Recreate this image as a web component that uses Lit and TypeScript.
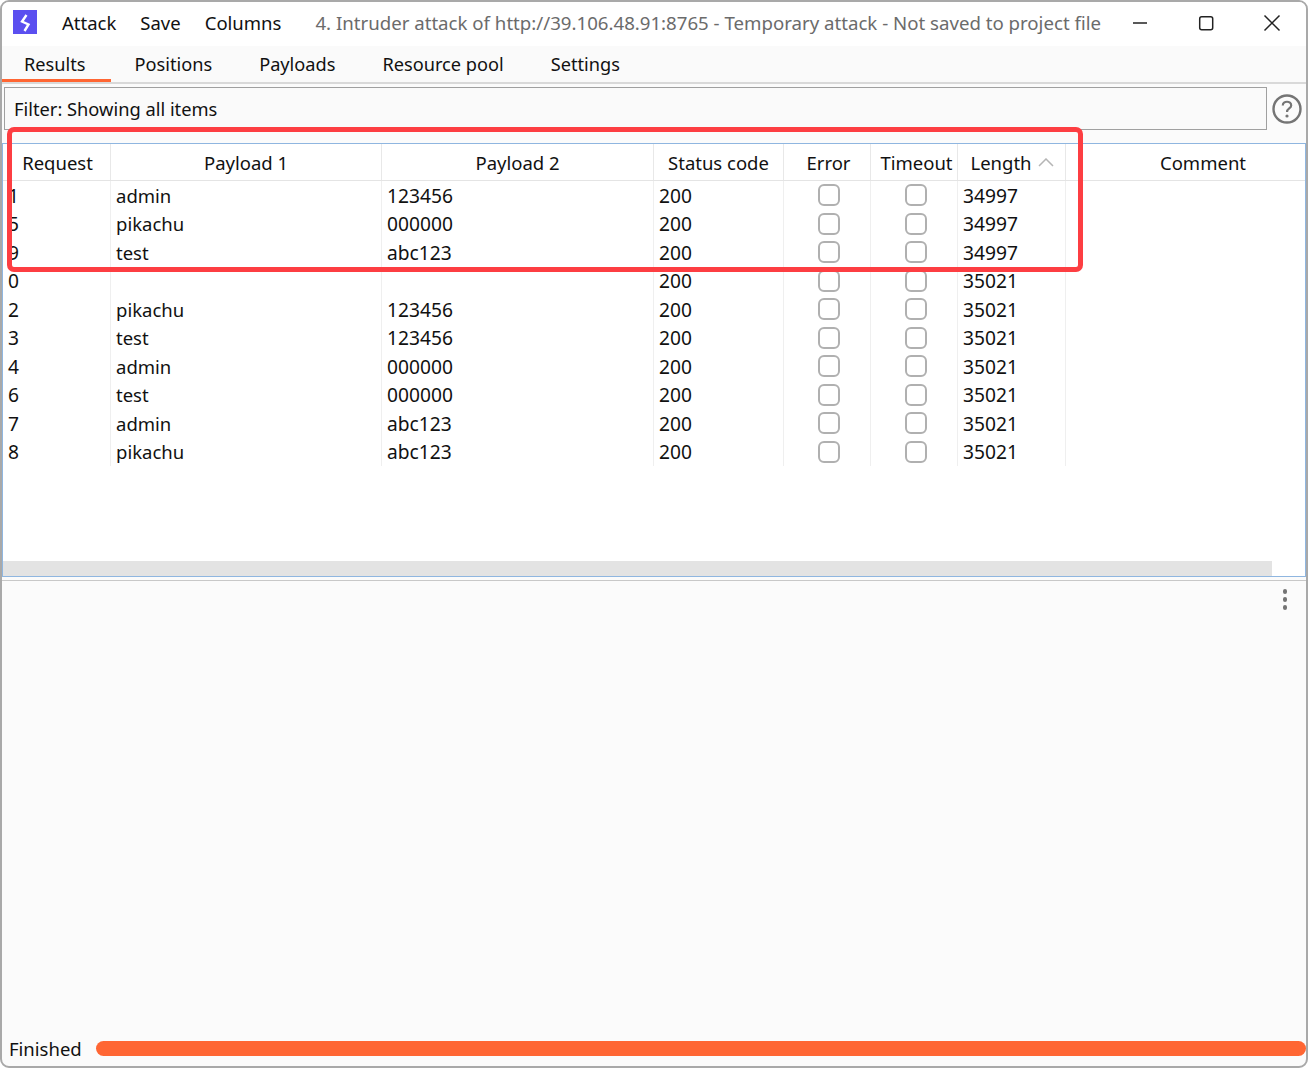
import { LitElement, html, css, svg } from "lit";
import { customElement } from "lit/decorators.js";

const ROWS = [
  ["1", "admin", "123456", "200", "34997"],
  ["5", "pikachu", "000000", "200", "34997"],
  ["9", "test", "abc123", "200", "34997"],
  ["0", "", "", "200", "35021"],
  ["2", "pikachu", "123456", "200", "35021"],
  ["3", "test", "123456", "200", "35021"],
  ["4", "admin", "000000", "200", "35021"],
  ["6", "test", "000000", "200", "35021"],
  ["7", "admin", "abc123", "200", "35021"],
  ["8", "pikachu", "abc123", "200", "35021"],
];

@customElement("app-root")
export class AppRoot extends LitElement {
  static styles = css`
    :host {
      display: block;
      width: 1308px;
      height: 1068px;
      background: #fff;
      font-family: "Noto Sans", "Open Sans", sans-serif;
      font-size: 18.5px;
      color: #111;
      overflow: hidden;
    }
    .window {
      position: relative;
      box-sizing: border-box;
      width: 1308px;
      height: 1068px;
      border: 2px solid #a9a9a9;
      border-radius: 9px;
      background: #fbfbfb;
      display: flex;
      flex-direction: column;
      overflow: hidden;
    }
    .titlebar {
      height: 44px;
      flex: none;
      background: #fff;
      display: flex;
      align-items: center;
      padding-left: 11px;
    }
    .logo {
      width: 24px;
      height: 24px;
      flex: none;
      display: block;
      margin: -4px 25px 0 0;
    }
    .menu {
      margin: 0 24px 3px 0;
    }
    .title {
      color: #6b6b6b;
      margin: 0 0 3px 10px;
      flex: 1;
      white-space: nowrap;
      font-size: 18.65px;
    }
    .wbtn {
      display: block;
      flex: none;
      margin-right: 24px;
    }
    .tabs {
      flex: none;
      display: flex;
      border-bottom: 2px solid #d9d9d9;
      box-sizing: border-box;
      height: 38px;
      background: #fafafa;
      font-size: 18.2px;
    }
    .tab {
      display: flex;
      align-items: center;
      height: 36px;
      padding: 0 23.5px;
      box-sizing: border-box;
    }
    .tab.active {
      width: 109px;
      padding: 3px 0 0 22px;
      border-bottom: 3px solid #ff6633;
    }
    .filterrow {
      display: flex;
      align-items: center;
      padding: 3px 0 0 2px;
      height: 46px;
      box-sizing: border-box;
      flex: none;
    }
    .filter {
      box-sizing: border-box;
      width: 1263px;
      height: 43px;
      border: 1px solid #a0a0a0;
      background: #fafafa;
      display: flex;
      align-items: center;
      padding-left: 9px;
      font-size: 18.3px;
    }
    .help {
      display: block;
      margin: 1px 0 0 5px;
    }
    .table {
      margin-top: 13px;
      box-sizing: border-box;
      height: 434px;
      flex: none;
      background: #fff;
      border: 1px solid #8fb6e0;
      position: relative;
      display: flex;
      flex-direction: column;
      overflow: hidden;
    }
    .grid {
      display: grid;
      grid-template-columns: 108px 271px 272px 130px 87px 87px 108px 274px;
    }
    .head {
      height: 37px;
      border-bottom: 1px solid #e4e4e4;
      box-sizing: border-box;
      flex: none;
    }
    .h {
      display: flex;
      align-items: center;
      justify-content: center;
      box-sizing: border-box;
      border-right: 1px solid #e8e8e8;
      white-space: nowrap;
    }
    .h:first-child {
      padding-left: 2px;
    }
    .h:last-child {
      border-right: none;
    }
    .h.err {
      padding-left: 3px;
    }
    .h.tmo {
      padding-left: 5px;
    }
    .sorted {
      gap: 6px;
      padding-left: 1px;
    }
    .body {
      grid-auto-rows: 28.5px;
      height: 285px;
      flex: none;
    }
    .c {
      display: flex;
      align-items: center;
      box-sizing: border-box;
      padding: 0 0 0 5px;
      border-right: 1px solid #efefef;
      white-space: nowrap;
    }
    .c.num {
      font-size: 19.2px;
    }
    .c.chk {
      justify-content: center;
      padding: 0 0 0 3px;
    }
    .c.free {
      border-right: none;
    }
    .box {
      width: 22px;
      height: 22px;
      box-sizing: border-box;
      border: 2px solid #b0b0b0;
      border-radius: 6px;
      background: #fff;
    }
    .scroll {
      position: absolute;
      left: 0;
      bottom: 0;
      width: 1269px;
      height: 15px;
      background: #e3e3e3;
    }
    .lower {
      margin-top: 3px;
      border-top: 1px solid #c8c8c8;
      flex: 1;
      position: relative;
      min-height: 0;
    }
    .dots {
      position: absolute;
      right: 19px;
      top: 8px;
      display: flex;
      flex-direction: column;
      gap: 3.5px;
    }
    .dots i {
      width: 4.5px;
      height: 4.5px;
      border-radius: 50%;
      background: #747474;
    }
    .status {
      height: 33px;
      display: flex;
      align-items: center;
      padding: 0 0 2px 7px;
      box-sizing: border-box;
      position: absolute;
      left: 0;
      right: 0;
      bottom: 0;
    }
    .bar {
      margin-left: 14px;
      flex: 1;
      height: 15px;
      border-radius: 8px;
      background: #ff6633;
    }
    .mark {
      position: absolute;
      left: 5px;
      top: 125px;
      width: 1076px;
      height: 145px;
      box-sizing: border-box;
      border: 5px solid #fd3e42;
      border-radius: 7px;
      pointer-events: none;
    }
  `;

  private row(r: string[]) {
    return html`
      <div class="c num">${r[0]}</div>
      <div class="c">${r[1]}</div>
      <div class="c num">${r[2]}</div>
      <div class="c num">${r[3]}</div>
      <div class="c chk"><div class="box"></div></div>
      <div class="c chk"><div class="box"></div></div>
      <div class="c num">${r[4]}</div>
      <div class="c free"></div>
    `;
  }

  render() {
    return html`
      <div class="window">
        <div class="titlebar">
          <svg class="logo" viewBox="0 0 24 24">
            <rect width="24" height="24" fill="#5b4ff0"></rect>
            <path d="M13.5 5 L9 11.5 L15.5 14.5 L11.5 21" fill="none" stroke="#fff" stroke-width="2.4"></path>
          </svg>
          <span class="menu">Attack</span>
          <span class="menu">Save</span>
          <span class="menu">Columns</span>
          <span class="title">4. Intruder attack of http://39.106.48.91:8765 - Temporary attack - Not saved to project file</span>
          <svg class="wbtn" width="150" height="24" viewBox="0 0 150 24">
            ${svg`<path d="M1 11 H15" stroke="#222" stroke-width="1.3" fill="none"></path>
            <rect x="67.7" y="4.7" width="13" height="13" rx="2" stroke="#222" stroke-width="1.5" fill="none"></rect>
            <path d="M132.5 3.5 L147.5 18.5 M147.5 3.5 L132.5 18.5" stroke="#222" stroke-width="1.5" fill="none"></path>`}
          </svg>
        </div>
        <div class="tabs">
          <div class="tab active">Results</div>
          <div class="tab">Positions</div>
          <div class="tab">Payloads</div>
          <div class="tab">Resource pool</div>
          <div class="tab">Settings</div>
        </div>
        <div class="filterrow">
          <div class="filter">Filter: Showing all items</div>
          <svg class="help" width="30" height="30" viewBox="0 0 30 30">
            <circle cx="15" cy="15" r="13.5" fill="none" stroke="#757575" stroke-width="2.4"></circle>
            <path d="M10.8 11.5 C10.8 6.5 19.2 6.5 19.2 11.5 C19.2 14.5 15 14.5 15 18" fill="none" stroke="#757575" stroke-width="2.2"></path>
            <circle cx="15" cy="22" r="1.6" fill="#757575"></circle>
          </svg>
        </div>
        <div class="table">
          <div class="grid head">
            <div class="h">Request</div>
            <div class="h">Payload 1</div>
            <div class="h">Payload 2</div>
            <div class="h">Status code</div>
            <div class="h err">Error</div>
            <div class="h tmo">Timeout</div>
            <div class="h sorted">Length
              <svg width="16" height="9" viewBox="0 0 16 9"><path d="M1 8 L8 1 L15 8" fill="none" stroke="#b5b5b5" stroke-width="1.5"></path></svg>
            </div>
            <div class="h">Comment</div>
          </div>
          <div class="grid body">${ROWS.map((r) => this.row(r))}</div>
          <div class="scroll"></div>
        </div>
        <div class="lower">
          <div class="dots"><i></i><i></i><i></i></div>
          <div class="status"><span>Finished</span><div class="bar"></div></div>
        </div>
        <div class="mark"></div>
      </div>
    `;
  }
}
